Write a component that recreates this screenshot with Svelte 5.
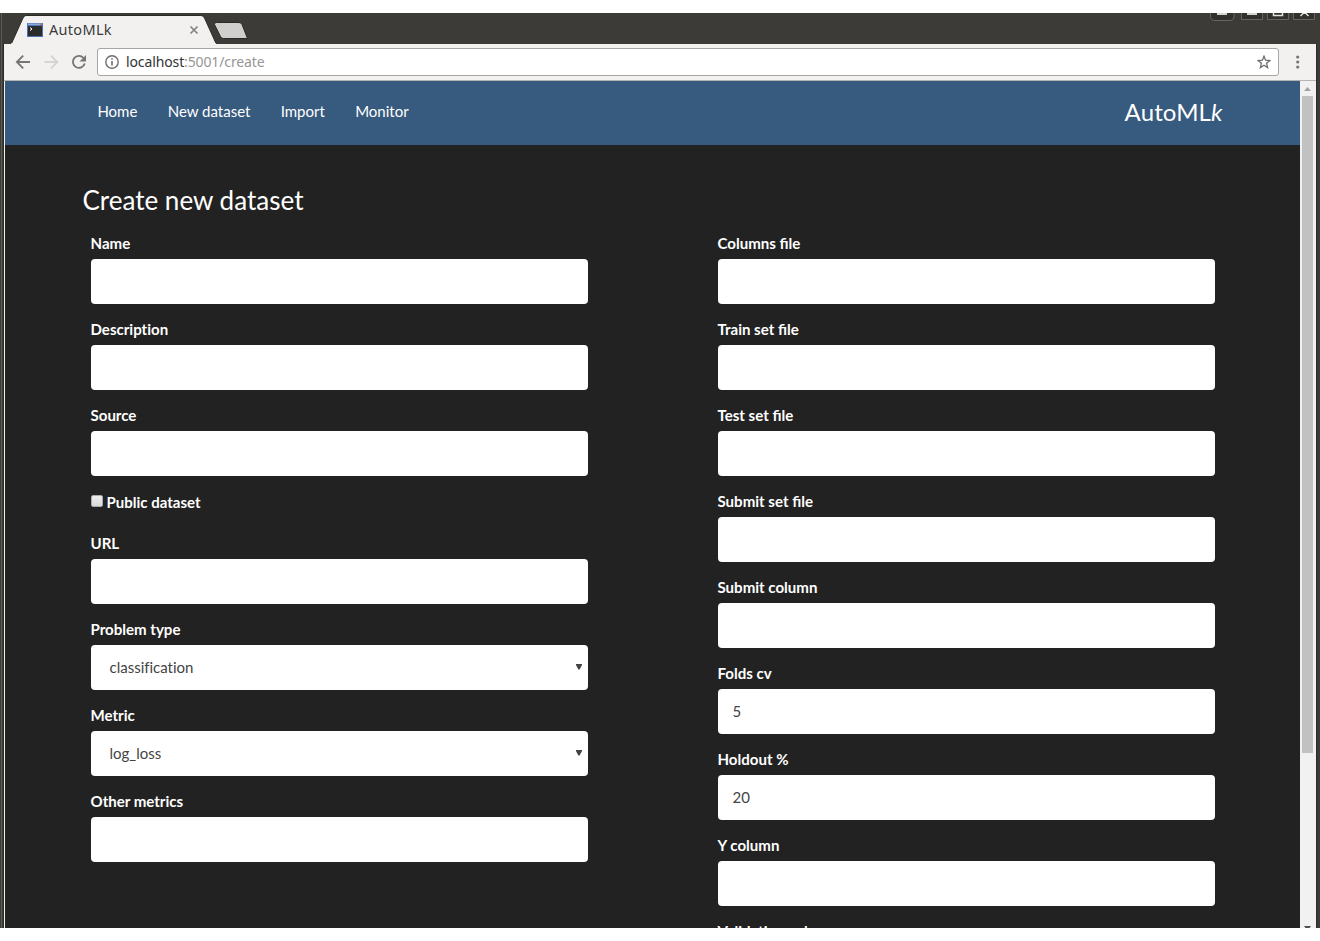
<script>
  const links = ['Home', 'New dataset', 'Import', 'Monitor'];
  const left = [
    { label: 'Name' },
    { label: 'Description', plain: true },
    { label: 'Source' },
    { label: 'Public dataset', kind: 'check' },
    { label: 'URL' },
    { label: 'Problem type', kind: 'select', value: 'classification', plain: true },
    { label: 'Metric', kind: 'select', value: 'log_loss' },
    { label: 'Other metrics' }
  ];
  const right = [
    { label: 'Columns file' },
    { label: 'Train set file' },
    { label: 'Test set file' },
    { label: 'Submit set file' },
    { label: 'Submit column' },
    { label: 'Folds cv', value: '5' },
    { label: 'Holdout %', value: '20' },
    { label: 'Y column' },
    { label: 'Validation column', plain: true }
  ];
</script>

{#snippet column(fields)}
  <div class="column">
    {#each fields as f}
      {#if f.kind === 'check'}
        <div class="check"><span class="box"></span><span>{f.label}</span></div>
      {:else}
        <div class="field" class:plain={f.plain}>
          <div class="label">{f.label}</div>
          <div class="control" class:select={f.kind === 'select'}>
            <span>{f.value ?? ''}</span>
            {#if f.kind === 'select'}
              <svg width="6" height="6" viewBox="0 0 6 6"><path d="M0 0h6v1L3.600 5.500h-1.200L0 1z" fill="#444" /></svg>
            {/if}
          </div>
        </div>
      {/if}
    {/each}
  </div>
{/snippet}

<div class="window">
  <div class="titlebar">
    <svg class="tabs" width="260" height="31" viewBox="0 0 260 31">
      <path d="M11.500 30.500L23 5Q24 2.500 26 2.500H201Q203.500 2.500 204.500 5L216 30.500" fill="#f2f1f0" stroke="#2b2a27" />
      <path d="M11.500 30h204.500v1H11z" fill="#f2f1f0" />
      <path d="M216.500 9.500H239Q241 9.500 242 11.500L247.500 25.500H223.500Q221.500 25.500 220.500 23.500L214.500 11.500Q214 9.500 216.500 9.500Z" fill="#d0cfcd" stroke="#2b2a27" />
      <g>
        <rect x="27" y="10" width="16" height="14" fill="#4b74b5" />
        <rect x="28" y="10.500" width="14" height="1.500" fill="#8caddc" />
        <rect x="40" y="10.500" width="2" height="1.500" fill="#e1654a" />
        <rect x="28" y="13" width="14" height="10" fill="#2c2c2c" />
        <path d="M30 14.500l2 1.500-2 1.500" stroke="#fff" fill="none" />
      </g>
      <path d="M190.500 13.500l7 7M197.500 13.500l-7 7" stroke="#858483" stroke-width="1.700" />
    </svg>
    <span class="tabtitle">AutoMLk</span>
    <svg class="winbtns" width="110" height="9" viewBox="0 0 110 9">
      <g fill="#32312d" stroke="#66655e">
        <path d="M.5 0v3q0 4.500 4.500 4.500h15q4 0 4-4.500V0" />
        <path d="M31.500 0v6.500h21V0M57.500 0v6.500h21V0M83.500 0v6.500h21V0" />
      </g>
      <path d="M7 0h10v2H7zM37 0h10v2H37z" fill="#d5d4cd" />
      <path d="M63.500 0v2.500h9V0M90.500 3l4-4 4 4" fill="none" stroke="#e2e1da" stroke-width="1.500" />
    </svg>
  </div>

  <div class="body">
    <div class="toolbar">
      <svg class="nav" width="92" height="36" viewBox="0 0 92 36" fill="none" stroke-width="1.900">
        <path d="M25 18H12.500M18.200 11.700L11.900 18l6.300 6.300" stroke="#777674" />
        <path d="M39.500 18H52M46 11.700l6.300 6.300L46 24.300" stroke="#d5d4d2" />
        <path d="M78.500 14A6 6 0 1 0 79.700 19.500" stroke="#777674" />
        <path d="M81 11v6.500H74.500z" fill="#777674" />
      </svg>
      <div class="address">
        <svg width="14" height="14" viewBox="0 0 14 14" fill="none" stroke="#6d6d6d">
          <circle cx="7" cy="7" r="6.200" stroke-width="1.400" />
          <path d="M7 6v4.500M7 3.200v1.600" stroke-width="1.600" />
        </svg>
        <span class="url"><b>localhost</b>:5001/create</span>
        <svg class="star" width="14" height="14" viewBox="0 0 14 14">
          <path d="M7 1.200l1.600 4 4.300.3-3.300 2.800 1 4.200L7 10.200l-3.600 2.300 1-4.200L1.100 5.500l4.300-.3z" fill="none" stroke="#6f6f6f" stroke-width="1.300" />
        </svg>
      </div>
      <svg class="dots" width="4" height="14" viewBox="0 0 4 14" fill="#777674">
        <circle cx="1.700" cy="2" r="1.600" /><circle cx="1.700" cy="7" r="1.600" /><circle cx="1.700" cy="12" r="1.600" />
      </svg>
    </div>

    <div class="viewport">
      <div class="page">
        <nav>
          {#each links as l}<span>{l}</span>{/each}
          <span class="brand">AutoML<i>k</i></span>
        </nav>
        <h1>Create new dataset</h1>
        <div class="form">
          {@render column(left)}
          {@render column(right)}
        </div>
      </div>
      <div class="scrollbar">
        <svg width="15" height="15" viewBox="0 0 15 15"><path d="M4 10h7L7.500 6z" fill="#a3a3a3" /></svg>
        <div class="thumb"></div>
        <svg class="down" width="15" height="2" viewBox="0 0 15 2"><path d="M4 0h7L9.500 2h-4z" fill="#505050" /></svg>
      </div>
    </div>
  </div>
</div>

<style>
  :global(body) { background: #fff; }
  .window {
    box-sizing: border-box;
    width: 1320px;
    height: 915px;
    margin-top: 13px;
    overflow: hidden;
    background: linear-gradient(90deg, #3c3b37 1px, #5b5a55 1px 2px, #3c3b37 2px);
  }
  .titlebar { height: 31px; position: relative; margin-left: 2px; background: #3c3b37; }
  .tabs { display: block; margin-left: -2px; }
  .tabtitle {
    position: absolute;
    left: 47px;
    top: 6px;
    font: 14.5px/20px "Noto Sans", sans-serif;
    color: #3c3c3c;
    letter-spacing: 0.3px;
  }
  .winbtns { position: absolute; left: 1208px; top: 0; }
  .body {
    box-sizing: border-box;
    height: 884px;
    margin: 0 4px;
    background: #f2f1f0;
    display: flex;
    flex-direction: column;
    box-shadow: -1px 0 #2b2a27, 1px 0 #2b2a27;
  }
  .toolbar {
    box-sizing: border-box;
    height: 37px;
    flex: none;
    display: flex;
    align-items: center;
    border-bottom: 1px solid #b5b4b2;
    padding-left: 1px;
  }
  .nav { flex: none; }
  .address {
    box-sizing: border-box;
    width: 1182px;
    height: 28px;
    border: 1px solid #a6a5a4;
    border-radius: 3px;
    background: #fff;
    display: flex;
    align-items: center;
    padding: 0 7px;
  }
  .url {
    margin-left: 7px;
    font: 14px/20px "Noto Sans", sans-serif;
    color: #969696;
    letter-spacing: -0.12px;
  }
  .url b { font-weight: 400; color: #333; }
  .star { margin-left: auto; }
  .dots { margin-left: 17px; }
  .viewport { flex: 1; min-height: 0; display: flex; margin-left: 1px; }
  .page {
    width: 1295px;
    flex: none;
    background: #222;
    color: #fff;
    font-family: Lato, sans-serif;
    font-size: 15px;
    line-height: 21px;
    overflow: hidden;
  }
  nav {
    box-sizing: border-box;
    height: 64px;
    background: #375a7f;
    display: flex;
    gap: 30.3px;
    padding: 20px 77.5px 0 92.4px;
  }
  .brand { margin-left: auto; font-size: 24px; line-height: 22px; letter-spacing: 0.12px; }
  h1 { margin: 41px 0 0 77.4px; font-size: 26px; line-height: 29px; font-weight: 400; letter-spacing: 0.02px; }
  .form { display: flex; gap: 130px; padding: 18px 0 0 86px; }
  .column { width: 497px; }
  .field { height: 86px; }
  .plain { font-variant-ligatures: none; }
  .label { font-weight: 700; height: 26px; margin-left: -0.5px; font-size: 15.06px; }
  .control {
    box-sizing: border-box;
    height: 45px;
    border-radius: 4px;
    background: #fff;
    color: #444;
    display: flex;
    align-items: center;
    padding: 0 14.5px;
  }
  .control.select { padding: 0 6px 0 18.5px; justify-content: space-between; }
  .control svg { margin-bottom: 1px; }
  .check {
    height: 42px;
    display: flex;
    font-weight: 700;
    gap: 3.6px;
    line-height: 23px;
  }
  .box {
    box-sizing: border-box;
    width: 12px;
    height: 12px;
    margin-top: 4px;
    border: 1px solid #aaa;
    border-radius: 2px;
    background: linear-gradient(#eee, #d9d9d9);
  }
  .scrollbar { width: 15px; background: #f1f1f1; position: relative; }
  .scrollbar svg { display: block; }
  .thumb { height: 657px; margin: 0 2px; background: #c1c1c1; }
  .down { position: absolute; left: 0; bottom: 0; }
</style>
